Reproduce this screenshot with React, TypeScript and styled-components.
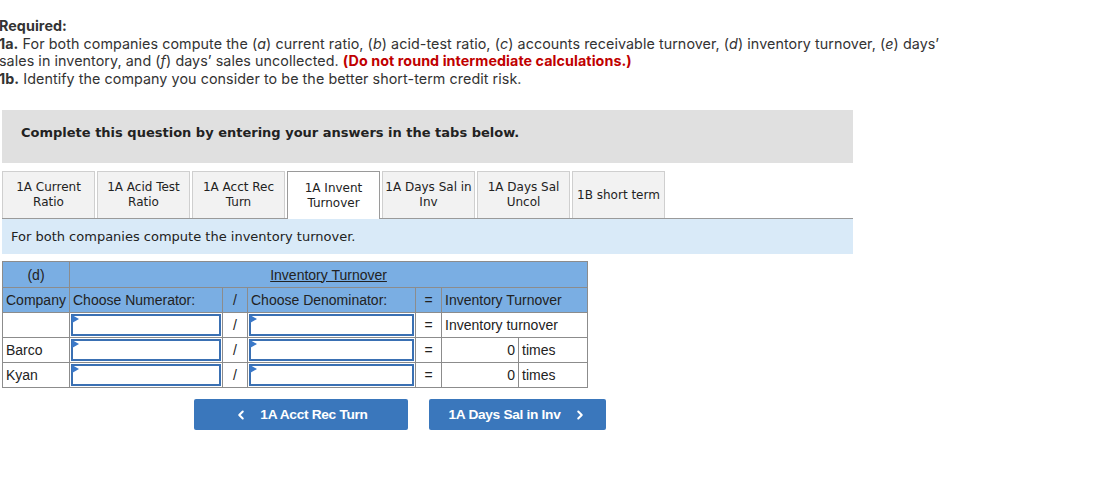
import styled, { createGlobalStyle } from "styled-components";
import { ChevronLeft, ChevronRight } from "lucide-react";

const Global = createGlobalStyle`
  body {
    margin: 0;
    background: #fff;
  }
`;

// Whole page
const Page = styled.div`
  padding: 17px 0 0 0;
  width: 1102px;
`;

const Required = styled.div`
  font-family: Inter, "Open Sans", sans-serif;
  font-size: 14.3px;
  line-height: 17.5px;
  color: #333;
  margin-left: -1px;
  letter-spacing: 0.07px;
`;

const Strong = styled.b<{ $red?: boolean }>`
  font-weight: 700;
  color: ${(p) => (p.$red ? "#c00000" : "#333")};
`;

const GrayBox = styled.div`
  margin: 23px 0 0 2px;
  width: 851px;
  height: 53px;
  background: #e0e0e0;
  display: flex;
  align-items: center;
  padding: 0 0 8px 19px;
  box-sizing: border-box;
  font-family: "DejaVu Sans", Verdana, sans-serif;
  font-size: 13px;
  font-weight: bold;
  color: #222;
`;

const TabRow = styled.div`
  margin: 8px 0 0 2px;
  width: 851px;
  display: flex;
  gap: 2px;
  border-bottom: 1px solid #9a9a9a;
`;

const Tab = styled.div<{ $active?: boolean }>`
  width: 93px;
  box-sizing: border-box;
  display: flex;
  align-items: center;
  justify-content: center;
  text-align: center;
  font-family: "DejaVu Sans", Verdana, sans-serif;
  font-size: 12px;
  line-height: 15px;
  color: #222;
  background: ${(p) => (p.$active ? "#fff" : "#f2f2f2")};
  border: 1px solid ${(p) => (p.$active ? "#9a9a9a" : "#cfcfcf")};
  border-bottom: none;
  margin-bottom: ${(p) => (p.$active ? "-1px" : "0")};
  height: ${(p) => (p.$active ? "48px" : "47px")};
`;

const Instruction = styled.div`
  margin-left: 2px;
  width: 851px;
  height: 35px;
  background: #d9eaf8;
  display: flex;
  align-items: center;
  padding-left: 9px;
  box-sizing: border-box;
  font-family: "DejaVu Sans", Verdana, sans-serif;
  font-size: 13px;
  color: #222;
`;

const Table = styled.table`
  margin: 7px 0 0 2px;
  border-collapse: collapse;
  font-family: "Liberation Sans", Arial, sans-serif;
  font-size: 14px;
  color: #222;
  table-layout: fixed;
  width: 585px;
`;

const Cell = styled.td<{ $head?: boolean; $align?: string }>`
  border: 1px solid #8c8c8c;
  background: ${(p) => (p.$head ? "#7aaee3" : "#fff")};
  text-align: ${(p) => p.$align || "left"};
  height: 24px;
  padding: 0 3px;
  white-space: nowrap;
  overflow: hidden;
`;

const Title = styled.span`
  text-decoration: underline;
`;

const InputCell = styled.td`
  border: 1px solid #8c8c8c;
  padding: 1px;
  height: 22px;
  background: #fff;
`;

const Select = styled.div`
  position: relative;
  height: 22px;
  border: 2px solid #3a70b3;
  box-sizing: border-box;
  background: #fff;
  &::before {
    content: "";
    position: absolute;
    left: -1px;
    top: -1px;
    border-top: 4px solid transparent;
    border-bottom: 4px solid transparent;
    border-left: 7px solid #3a78c8;
  }
`;

const NavRow = styled.div`
  display: flex;
  gap: 21px;
  margin: 11px 0 0 194px;
`;

const NavButton = styled.button<{ $w: number }>`
  width: ${(p) => p.$w}px;
  height: 31px;
  border: none;
  border-radius: 2px;
  background: #3a77bc;
  color: #fff;
  font-family: "Liberation Sans", Arial, sans-serif;
  font-size: 13.7px;
  font-weight: bold;
  display: flex;
  align-items: center;
  justify-content: center;
  gap: 12px;
  padding: 0;
  letter-spacing: -0.3px;
`;

const rows = [
  { name: "", result: null },
  { name: "Barco", result: "0" },
  { name: "Kyan", result: "0" },
];

export default function App() {
  return (
    <Page>
      <Global />
      <Required>
        <Strong>Required:</Strong>
        <br />
        <Strong>1a.</Strong> For both companies compute the (<i>a</i>) current ratio, (<i>b</i>) acid-test
        ratio, (<i>c</i>) accounts receivable turnover, (<i>d</i>) inventory turnover, (<i>e</i>) days’
        <br />
        sales in inventory, and (<i>f</i>) days’ sales uncollected.{" "}
        <Strong $red>(Do not round intermediate calculations.)</Strong>
        <br />
        <Strong>1b.</Strong> Identify the company you consider to be the better short-term credit risk.
      </Required>

      <GrayBox>Complete this question by entering your answers in the tabs below.</GrayBox>

      <TabRow>
        <Tab>1A Current<br />Ratio</Tab>
        <Tab>1A Acid Test<br />Ratio</Tab>
        <Tab>1A Acct Rec<br />Turn</Tab>
        <Tab $active>1A Invent<br />Turnover</Tab>
        <Tab>1A Days Sal in<br />Inv</Tab>
        <Tab>1A Days Sal<br />Uncol</Tab>
        <Tab>1B short term</Tab>
      </TabRow>

      <Instruction>For both companies compute the inventory turnover.</Instruction>

      <Table>
        <colgroup>
          <col style={{ width: 67 }} />
          <col style={{ width: 153 }} />
          <col style={{ width: 25 }} />
          <col style={{ width: 168 }} />
          <col style={{ width: 26 }} />
          <col style={{ width: 77 }} />
          <col style={{ width: 69 }} />
        </colgroup>
        <tbody>
          <tr>
            <Cell $head $align="center" style={{ height: 25 }}>(d)</Cell>
            <Cell $head $align="center" colSpan={6}>
              <Title>Inventory Turnover</Title>
            </Cell>
          </tr>
          <tr>
            <Cell $head>Company</Cell>
            <Cell $head>Choose Numerator:</Cell>
            <Cell $head $align="center">/</Cell>
            <Cell $head>Choose Denominator:</Cell>
            <Cell $head $align="center">=</Cell>
            <Cell $head colSpan={2}>Inventory Turnover</Cell>
          </tr>
          {rows.map((r, i) => (
            <tr key={i}>
              <Cell>{r.name}</Cell>
              <InputCell>
                <Select />
              </InputCell>
              <Cell $align="center">/</Cell>
              <InputCell>
                <Select />
              </InputCell>
              <Cell $align="center">=</Cell>
              {r.result === null ? (
                <Cell colSpan={2}>Inventory turnover</Cell>
              ) : (
                <>
                  <Cell $align="right">{r.result}</Cell>
                  <Cell>times</Cell>
                </>
              )}
            </tr>
          ))}
        </tbody>
      </Table>

      <NavRow>
        <NavButton $w={214}>
          <ChevronLeft size={14} strokeWidth={3.5} />
          1A Acct Rec Turn
        </NavButton>
        <NavButton $w={177}>
          1A Days Sal in Inv
          <ChevronRight size={14} strokeWidth={3.5} />
        </NavButton>
      </NavRow>
    </Page>
  );
}
